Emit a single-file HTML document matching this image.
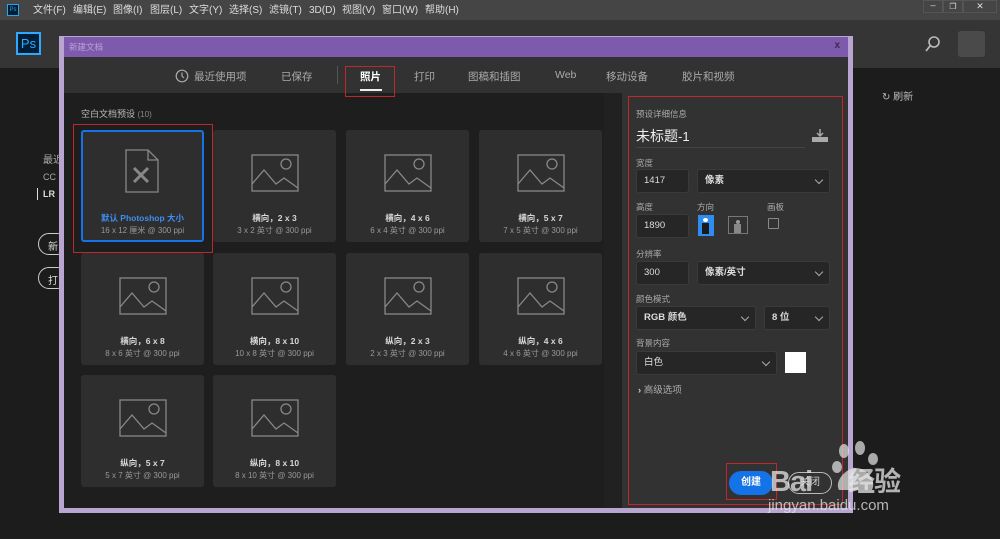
<!DOCTYPE html>
<html><head><meta charset="utf-8">
<style>
*{margin:0;padding:0;box-sizing:border-box}
body{width:1000px;height:539px;overflow:hidden;background:#1c1c1c;font-family:"Liberation Sans","Noto Sans CJK SC",sans-serif;position:relative;color:#ccc}
.abs{position:absolute;white-space:nowrap}
.menu{left:0;top:0;width:1000px;height:20px;background:#454545;font-size:10px;color:#ddd}
.menu span{position:absolute;top:5px;white-space:nowrap;line-height:12px;height:12px}
.hdr{left:0;top:20px;width:1000px;height:48px;background:#353535}
.tile{position:absolute;width:123px;height:112px;background:#2e2e2e;border-radius:3px;text-align:center}
.tile svg{position:absolute;left:38px;top:24px}
.tile .t{position:absolute;left:0;right:0;top:82px;font-size:8.5px;color:#d8d8d8;font-weight:bold}
.tile .s{position:absolute;left:0;right:0;top:95px;font-size:8px;color:#999}
.lbl{position:absolute;font-size:8.5px;color:#aaa}
.fld{position:absolute;background:#262626;border:1px solid #3a3a3a;border-radius:3px;font-size:9.5px;color:#ddd;padding-left:7px;line-height:22px;height:24px}
.chev{position:absolute;right:7px;top:7px;width:6px;height:6px;border-right:1.3px solid #aaa;border-bottom:1.3px solid #aaa;transform:rotate(45deg)}
.tab{position:absolute;top:69px;font-size:10.5px;color:#aaa;white-space:nowrap}
</style></head><body>
<div class="abs menu">
<div class="abs" style="left:7px;top:4px;width:12px;height:12px;border:1px solid #2fa3e6;background:#001e36;font-size:6px;color:#2fa3e6;text-align:center;line-height:10px">Ps</div>
<span style="left:33px">文件(F)</span><span style="left:73px">编辑(E)</span><span style="left:113px">图像(I)</span><span style="left:150px">图层(L)</span><span style="left:189px">文字(Y)</span><span style="left:229px">选择(S)</span><span style="left:269px">滤镜(T)</span><span style="left:309px">3D(D)</span><span style="left:342px">视图(V)</span><span style="left:382px">窗口(W)</span><span style="left:425px">帮助(H)</span>
<div class="abs" style="left:923px;top:0;width:20px;height:13px;border:1px solid #555;font-size:9px;text-align:center;line-height:9px">–</div>
<div class="abs" style="left:943px;top:0;width:20px;height:13px;border:1px solid #555;font-size:8px;text-align:center;line-height:11px">❐</div>
<div class="abs" style="left:963px;top:0;width:34px;height:13px;border:1px solid #555;font-size:9px;text-align:center;line-height:11px">✕</div>
</div>
<div class="abs hdr">
<div class="abs" style="left:16px;top:12px;width:25px;height:23px;border:2px solid #31a8ff;background:#001e36;color:#31a8ff;font-size:13px;text-align:center;line-height:19px">Ps</div>
<svg class="abs" style="left:924px;top:15px" width="18" height="18"><circle cx="10" cy="7" r="5" fill="none" stroke="#bbb" stroke-width="1.6"/><line x1="6" y1="11" x2="2" y2="16" stroke="#bbb" stroke-width="1.8"/></svg>
<div class="abs" style="left:958px;top:11px;width:27px;height:26px;background:#4a4a4a;border-radius:3px"></div>
</div>
<div class="abs" style="left:43px;top:151px;font-size:10px;color:#aaa">最近</div>
<div class="abs" style="left:43px;top:172px;font-size:9px;color:#aaa">CC</div>
<div class="abs" style="left:37px;top:188px;width:1px;height:12px;background:#ddd"></div>
<div class="abs" style="left:43px;top:189px;font-size:9px;color:#ddd;font-weight:bold">LR</div>
<div class="abs" style="left:38px;top:233px;width:30px;height:22px;border:1.5px solid #ccc;border-radius:11px;font-size:10px;color:#ddd;padding:4px 9px">新</div>
<div class="abs" style="left:38px;top:267px;width:30px;height:22px;border:1.5px solid #ccc;border-radius:11px;font-size:10px;color:#ddd;padding:4px 9px">打</div>
<div class="abs" style="left:882px;top:88px;font-size:10px;color:#bbb">↻ 刷新</div>
<div class="abs" style="left:59px;top:36px;width:794px;height:477px;background:#b9a6d0"></div>
<div class="abs" style="left:64px;top:37px;width:784px;height:20px;background:#7e5aac"><span class="abs" style="left:5px;top:4px;font-size:8.5px;color:#b9a4d8">新建文档</span><span class="abs" style="right:8px;top:3px;font-size:10px;color:#3a2a50;font-weight:bold">x</span></div>
<div class="abs" style="left:64px;top:57px;width:784px;height:36px;background:#323232"></div>
<div class="abs" style="left:64px;top:93px;width:558px;height:415px;background:#1e1e1e"></div>
<div class="abs" style="left:604px;top:93px;width:18px;height:415px;background:#212121"></div>
<div class="abs" style="left:622px;top:93px;width:226px;height:415px;background:#323232"></div>
<svg class="abs" style="left:175px;top:69px" width="14" height="14"><circle cx="7" cy="7" r="5.8" fill="none" stroke="#aaa" stroke-width="1.2"/><path d="M7 3.5V7l2 2" fill="none" stroke="#aaa" stroke-width="1.2"/></svg>
<div class="tab" style="left:194px">最近使用项</div>
<div class="tab" style="left:281px">已保存</div>
<div class="abs" style="left:337px;top:66px;width:1px;height:18px;background:#555"></div>
<div class="tab" style="left:360px;color:#fff;font-weight:bold">照片</div>
<div class="abs" style="left:360px;top:89px;width:22px;height:2px;background:#eee"></div>
<div class="abs" style="left:345px;top:66px;width:50px;height:31px;border:1px solid #c0272d"></div>
<div class="tab" style="left:414px">打印</div>
<div class="tab" style="left:468px">图稿和插图</div>
<div class="tab" style="left:555px">Web</div>
<div class="tab" style="left:606px">移动设备</div>
<div class="tab" style="left:682px">胶片和视频</div>
<div class="abs" style="left:81px;top:107px;font-size:9px;color:#bbb">空白文档预设 <span style="color:#888;font-size:8px">(10)</span></div>
<div class="abs" style="left:73px;top:124px;width:140px;height:129px;border:1px solid #c0272d"></div>
<div class="tile" style="left:81px;top:130px;border:2px solid #1473e6">
<svg style="left:40px;top:16px" width="40" height="48"><path d="M3 2h22l10 10v32H3z M25 2v10h10" fill="none" stroke="#888" stroke-width="1.3"/><path d="M11 20l14 14M25 20L11 34" stroke="#888" stroke-width="3"/></svg>
<div class="t" style="color:#3d8ef0;top:80px">默认 Photoshop 大小</div><div class="s" style="top:93px">16 x 12 厘米 @ 300 ppi</div></div>
<div id="tiles"></div>
<div class="abs" style="left:628px;top:96px;width:215px;height:409px;border:1px solid #c0272d"></div>
<div class="lbl" style="left:636px;top:108px">预设详细信息</div>
<div class="abs" style="left:636px;top:126px;font-size:14px;color:#eee">未标题<span style="font-size:13px">-1</span></div>
<div class="abs" style="left:636px;top:147px;width:169px;height:1px;background:#444"></div>
<svg class="abs" style="left:812px;top:129px" width="16" height="13"><path d="M8 0v7M5 4l3 3 3-3" fill="none" stroke="#aaa" stroke-width="1.5"/><path d="M0 8h16v5H0z" fill="#aaa"/></svg>
<div class="lbl" style="left:636px;top:157px">宽度</div>
<div class="fld" style="left:636px;top:169px;width:53px">1417</div>
<div class="fld" style="left:697px;top:169px;width:133px;font-weight:bold">像素<i class="chev"></i></div>
<div class="lbl" style="left:636px;top:201px">高度</div>
<div class="lbl" style="left:697px;top:201px">方向</div>
<div class="lbl" style="left:767px;top:201px">画板</div>
<div class="fld" style="left:636px;top:214px;width:53px">1890</div>
<div class="abs" style="left:698px;top:215px;width:16px;height:21px;border:1.5px solid #2f8cf0;background:#2f8cf0"><div class="abs" style="left:4px;top:2px;width:5px;height:4px;background:#fff;border-radius:50%"></div><div class="abs" style="left:3px;top:7px;width:7px;height:11px;background:#1a1a1a"></div></div>
<div class="abs" style="left:728px;top:216px;width:20px;height:18px;border:1.5px solid #777"><div class="abs" style="left:7px;top:3px;width:4px;height:4px;background:#999;border-radius:50%"></div><div class="abs" style="left:5px;top:7px;width:7px;height:9px;background:#888"></div></div>
<div class="abs" style="left:768px;top:218px;width:11px;height:11px;border:1.3px solid #888;border-radius:1px"></div>
<div class="lbl" style="left:636px;top:248px">分辨率</div>
<div class="fld" style="left:636px;top:261px;width:53px">300</div>
<div class="fld" style="left:697px;top:261px;width:133px;font-weight:bold">像素/英寸<i class="chev"></i></div>
<div class="lbl" style="left:636px;top:293px">颜色模式</div>
<div class="fld" style="left:636px;top:306px;width:120px;font-weight:bold">RGB 颜色<i class="chev"></i></div>
<div class="fld" style="left:764px;top:306px;width:66px;font-weight:bold">8 位<i class="chev"></i></div>
<div class="lbl" style="left:636px;top:337px">背景内容</div>
<div class="fld" style="left:636px;top:351px;width:141px">白色<i class="chev"></i></div>
<div class="abs" style="left:785px;top:352px;width:21px;height:21px;background:#fff"></div>
<div class="abs" style="left:638px;top:382px;font-size:9.5px;color:#aaa"><b style="color:#ccc">›</b> 高级选项</div>
<div class="abs" style="left:729px;top:471px;width:44px;height:24px;border-radius:12px;background:#1473e6;color:#fff;font-size:10px;font-weight:bold;text-align:center;line-height:24px">创建</div>
<div class="abs" style="left:788px;top:472px;width:44px;height:22px;border-radius:11px;border:1.5px solid #bbb;color:#ccc;font-size:10px;text-align:center;line-height:20px">关闭</div>
<div class="abs" style="left:726px;top:463px;width:51px;height:37px;border:1px solid #c0272d"></div>
<div class="abs" style="left:770px;top:460px;font-size:29px;color:rgba(230,230,230,.75);font-weight:bold;letter-spacing:-1px">Bai<span style="display:inline-block;width:36px"></span><span style="font-size:27px">经验</span></div>
<div class="abs" style="left:768px;top:497px;font-size:15px;color:rgba(230,230,230,.75)">jingyan.baidu.com</div>
<svg class="abs" style="left:830px;top:440px" width="52" height="52" fill="rgba(230,230,230,.7)"><ellipse cx="14" cy="11" rx="5" ry="7"/><ellipse cx="30" cy="8" rx="5" ry="7"/><ellipse cx="43" cy="19" rx="5" ry="6"/><ellipse cx="7" cy="27" rx="5" ry="6"/><path d="M9 50c-5-9 7-22 17-22s21 12 16 22z"/></svg>
<script>
var d=[["横向，2 x 3","3 x 2 英寸 @ 300 ppi",213,130],["横向，4 x 6","6 x 4 英寸 @ 300 ppi",346,130],["横向，5 x 7","7 x 5 英寸 @ 300 ppi",479,130],
["横向，6 x 8","8 x 6 英寸 @ 300 ppi",81,253],["横向，8 x 10","10 x 8 英寸 @ 300 ppi",213,253],["纵向，2 x 3","2 x 3 英寸 @ 300 ppi",346,253],["纵向，4 x 6","4 x 6 英寸 @ 300 ppi",479,253],
["纵向，5 x 7","5 x 7 英寸 @ 300 ppi",81,375],["纵向，8 x 10","8 x 10 英寸 @ 300 ppi",213,375]];
var h="";d.forEach(function(t){h+='<div class="tile" style="left:'+t[2]+'px;top:'+t[3]+'px"><svg width="48" height="38"><rect x="1" y="1" width="46" height="36" fill="none" stroke="#888" stroke-width="1.3"/><circle cx="35" cy="10" r="5" fill="none" stroke="#888" stroke-width="1.3"/><path d="M1 30l12-14 12 14 8-6 14 10" fill="none" stroke="#888" stroke-width="1.3"/></svg><div class="t">'+t[0]+'</div><div class="s">'+t[1]+'</div></div>'});
document.getElementById("tiles").innerHTML=h;
</script>
</body></html>
